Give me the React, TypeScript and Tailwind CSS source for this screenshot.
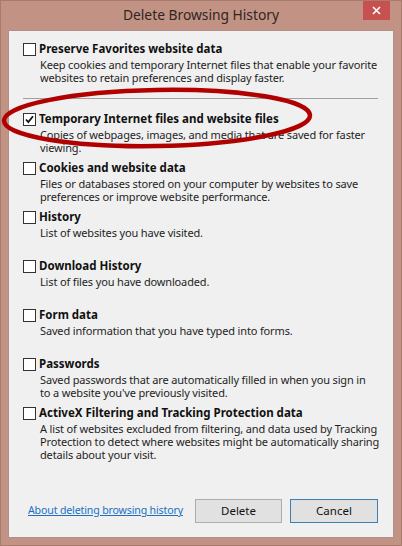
const items = [
  {
    title: "Preserve Favorites website data",
    lines: [
      "Keep cookies and temporary Internet files that enable your favorite",
      "websites to retain preferences and display faster.",
    ],
    checked: false,
  },
  {
    title: "Temporary Internet files and website files",
    lines: ["Copies of webpages, images, and media that are saved for faster", "viewing."],
    checked: true,
  },
  {
    title: "Cookies and website data",
    lines: [
      "Files or databases stored on your computer by websites to save",
      "preferences or improve website performance.",
    ],
    checked: false,
  },
  { title: "History", lines: ["List of websites you have visited."], checked: false },
  { title: "Download History", lines: ["List of files you have downloaded."], checked: false },
  { title: "Form data", lines: ["Saved information that you have typed into forms."], checked: false },
  {
    title: "Passwords",
    lines: [
      "Saved passwords that are automatically filled in when you sign in",
      "to a website you've previously visited.",
    ],
    checked: false,
  },
  {
    title: "ActiveX Filtering and Tracking Protection data",
    lines: [
      "A list of websites excluded from filtering, and data used by Tracking",
      "Protection to detect where websites might be automatically sharing",
      "details about your visit.",
    ],
    checked: false,
  },
];

const CheckBox = ({ checked }: { checked: boolean }) => (
  <div className="w-[13px] h-[13px] shrink-0 border border-[#333] bg-white flex items-center justify-center">
    {checked && (
      <svg width="11" height="11" viewBox="0 0 11 11">
        <path d="M2 5.5 L4.3 8 L9 2.2" stroke="#111" strokeWidth="1.8" fill="none" />
      </svg>
    )}
  </div>
);

const Item = ({ title, lines, checked }: { title: string; lines: string[]; checked: boolean }) => (
  <div className="flex items-start">
    <div className="h-[14px] flex items-center">
      <CheckBox checked={checked} />
    </div>
    <div className="pl-[3px]">
      <div className="text-[11.5px] leading-[14px] font-bold text-[#111] whitespace-nowrap">{title}</div>
      <div className="mt-[2px] pl-[1px] text-[11px] leading-[13px] tracking-[-0.15px] text-[#1e1e1e]">
        {lines.map((l, i) => (
          <div key={i} className="whitespace-nowrap">
            {l}
          </div>
        ))}
      </div>
    </div>
  </div>
);

export default function App() {
  return (
    <div
      className="relative w-[402px] h-[546px] bg-[#c29384] border border-[#a87b6d] flex flex-col overflow-hidden"
      style={{ fontFamily: '"Noto Sans", "Open Sans", sans-serif' }}
    >
      {/* title bar */}
      <div className="relative h-[29px] shrink-0 flex items-center justify-center">
        <span className="text-[13.8px] text-[#2e2622] -mt-[1px]">Delete Browsing History</span>
        <div className="absolute top-[-1px] right-[11px] w-[27px] h-[20px] bg-[#c75050] flex items-center justify-center">
          <svg width="9" height="9" viewBox="0 0 9 9">
            <path d="M1 1 L8 8 M8 1 L1 8" stroke="#fff" strokeWidth="1.6" />
          </svg>
        </div>
      </div>

      {/* panel */}
      <div className="mx-[7px] mb-[7px] flex-1 bg-[#f0f0f0] border border-[#b0908a] pl-[14px] pt-[11px] flex flex-col">
        <div className="h-[56px]">
          <Item {...items[0]} />
        </div>
        <div className="w-[355px] h-[1px] bg-[#a0a0a0]" />
        <div className="h-[13px]" />
        {items.slice(1).map((it) => (
          <div key={it.title} className="h-[49px]">
            <Item {...it} />
          </div>
        ))}

        <div className="mt-auto mb-[14px] flex items-center pr-[15px]">
          <a href="#" className="ml-[5px] text-[10.6px] tracking-[-0.15px] text-[#1a6fc4] underline whitespace-nowrap">
            About deleting browsing history
          </a>
          <div className="ml-auto flex gap-[8px]">
            <button className="w-[87px] h-[24px] bg-[#e1e1e1] border border-[#adadad] text-[11.5px] text-[#111]">
              Delete
            </button>
            <button className="w-[88px] h-[24px] bg-[#e1e1e1] border border-[#3c7fb1] text-[11.5px] text-[#111]">
              Cancel
            </button>
          </div>
        </div>
      </div>

      {/* red marker ellipse */}
      <svg className="absolute left-0 top-0 pointer-events-none" width="402" height="546">
        <ellipse
          cx="156"
          cy="117"
          rx="153"
          ry="28"
          transform="rotate(-1 156 117)"
          fill="none"
          stroke="#b00000"
          strokeWidth="4.5"
        />
      </svg>
    </div>
  );
}
